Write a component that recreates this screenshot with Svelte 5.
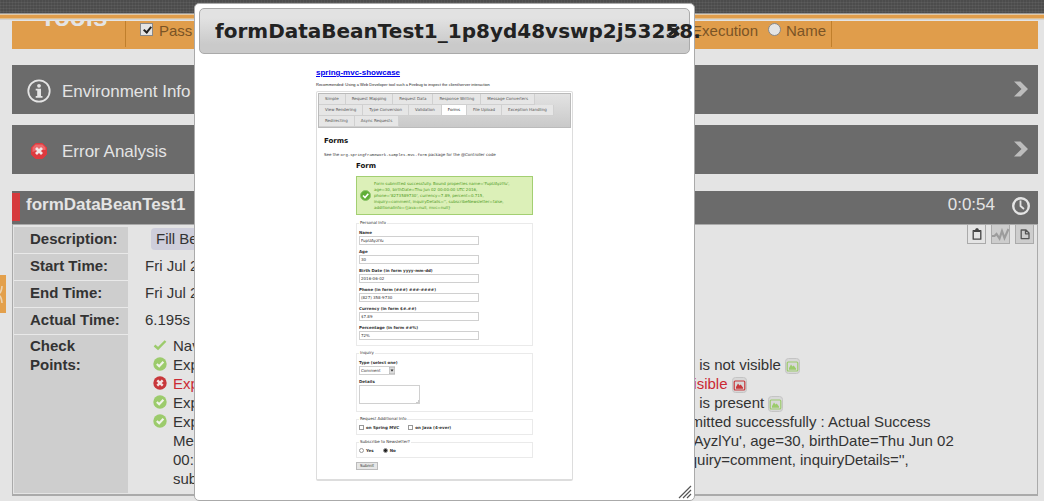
<script>
  const panels = [
    { title: 'Environment Info', kind: 'info' },
    { title: 'Error Analysis', kind: 'error' }
  ];

  const times = [
    { label: 'Start Time:', value: 'Fri Jul 29 2016 11:42:06' },
    { label: 'End Time:', value: 'Fri Jul 29 2016 11:42:12' },
    { label: 'Actual Time:', value: '6.195s' }
  ];

  const checks = [
    { state: 'done', text: 'Navigated to Forms page' },
    { state: 'pass', text: 'Expected Form Submit Success Message (css=div.success.message.box.text) is not visible', shot: true },
    { state: 'fail', text: 'Expected Form Submit Success Message (css=div.success.message.box) is visible', shot: true },
    { state: 'pass', text: 'Expected Form Submit Success Message (css=div.success.message.box.text) is present', shot: true },
    {
      state: 'pass',
      text: "Expected Success Message Text should be displayed on page like : Form submitted successfully : Actual Success Message Text is : Form submitted successfully. Bound properties name='FupUAyzlYu', age=30, birthDate=Thu Jun 02 00:00:00 UTC 2016, phone='8273589730', currency=$7.89, percent=0.715, inquiry=comment, inquiryDetails='', subscribeNewsletter=false, additionalInfo={java=null, mvc=null}"
    }
  ];

  const tabRows = [
    ['Simple', 'Request Mapping', 'Request Data', 'Response Writing', 'Message Converters'],
    ['View Rendering', 'Type Conversion', 'Validation', 'Forms', 'File Upload', 'Exception Handling'],
    ['Redirecting', 'Async Requests']
  ];

  const successLines = [
    "Form submitted successfully. Bound properties name='FupUAyzlYu',",
    'age=30, birthDate=Thu Jun 02 00:00:00 UTC 2016,',
    "phone='8273589730', currency=7.89, percent=0.715,",
    "inquiry=comment, inquiryDetails='', subscribeNewsletter=false,",
    'additionalInfo={java=null, mvc=null}'
  ];

  const fields = [
    { id: 'name', label: 'Name', value: 'FupUAyzlYu' },
    { id: 'age', label: 'Age', value: '30' },
    { id: 'birth', label: 'Birth Date (in form yyyy-mm-dd)', value: '2016-06-02' },
    { id: 'phone', label: 'Phone (in form (###) ###-####)', value: '(827) 358-9730' },
    { id: 'currency', label: 'Currency (in form $#.##)', value: '$7.89' },
    { id: 'percent', label: 'Percentage (in form ##%)', value: '72%' }
  ];
</script>

<div class="page">
  <header class="topbar"></header>
  <button class="drawer" aria-label="Open menu">
    <svg width="6" height="38" viewBox="0 0 6 38"><path d="M2 11Q1.5 19 -3 19.5Q1.5 20 2 28" fill="none" stroke="#ecd2ae" stroke-width="1.6" /></svg>
  </button>

  <main>
    <div class="toolbar">
      <h1>Tools</h1>
      <div class="filters">
        <label><input type="checkbox" checked />Pass</label>
        <div class="order">
          <label><input type="radio" name="order" checked />Execution</label>
          <label><input type="radio" name="order" />Name</label>
        </div>
      </div>
    </div>

    {#each panels as p}
      <button class="panel">
        {#if p.kind === 'info'}
          <svg width="24" height="24" viewBox="0 0 24 24">
            <circle cx="12" cy="12" r="10.7" fill="none" stroke="#e4e4e4" stroke-width="1.8" />
            <circle cx="12" cy="6.8" r="1.9" fill="#e4e4e4" />
            <path d="M8.7 9.7H14V17H15.5V18.8H8.7V17H10.2V11.4H8.7Z" fill="#e4e4e4" />
          </svg>
        {:else}
          <svg width="24" height="24" viewBox="0 0 24 24">
            <path d="M8.5 4.5H15.5L19.5 8.5V15.5L15.5 19.5H8.5L4.5 15.5V8.5Z" fill="#dd3a3f" stroke="#dd3a3f" stroke-linejoin="round" />
            <path d="M8.5 5.5H15.5L18.5 8.5V11Q12 10 5.5 13V8.5Z" fill="#ea6a6d" />
            <path d="M9 9L15 15M15 9L9 15" stroke="#f3e6e6" stroke-width="2.8" />
          </svg>
        {/if}
        <span>{p.title}</span>
        <svg class="chev" width="14" height="16" viewBox="0 0 14 16"><path d="M0 0.5H6.5L14 8L6.5 15.5H0L7.5 8Z" fill="#bcbcbc" /></svg>
      </button>
    {/each}

    <section class="result">
      <div class="result-head">
        <h2>formDataBeanTest1</h2>
        <span class="time">0:0:54</span>
        <svg width="20" height="20" viewBox="0 0 20 20">
          <circle cx="10" cy="10" r="7.8" fill="none" stroke="#e4e4e4" stroke-width="2.4" />
          <path d="M9.5 4.5V10L13 13" fill="none" stroke="#e4e4e4" stroke-width="1.8" />
        </svg>
      </div>
      <div class="result-body">
        <div class="tools">
          <button aria-label="Details">
            <svg width="14" height="16" viewBox="0 0 14 16"><path d="M3.2 4.6H10.8V13.2H3.2Z" fill="none" stroke="#444" stroke-width="1.3" stroke-linejoin="round" /><path d="M4 4H5L6 2.3H8L9 4H10V6H4Z" fill="#444" /></svg>
          </button>
          <button class="off" aria-label="Chart">
            <svg width="17" height="16" viewBox="0 0 17 16"><path d="M0 10H2.5L4.5 8L7.5 12.5L10 5L12.5 12L16.5 3" fill="none" stroke="#9c9c9c" stroke-width="2.2" /></svg>
          </button>
          <button class="off" aria-label="File">
            <svg width="14" height="16" viewBox="0 0 14 16"><path d="M3.2 4H8L11 7V12.6H3.2ZM7.5 4V7.8H11" fill="none" stroke="#555" stroke-width="1.3" stroke-linejoin="round" /></svg>
          </button>
        </div>
        <table>
          <tbody>
            <tr><th scope="row">Description:</th><td><span class="pill">Fill Bean Data</span></td></tr>
            {#each times as t}
              <tr><th scope="row">{t.label}</th><td>{t.value}</td></tr>
            {/each}
            <tr class="points">
              <th scope="row">Check Points:</th>
              <td>
                <ul>
                  {#each checks as c}
                    <li class={c.state}>
                      <svg class="mark" width="14" height="14" viewBox="0 0 14 14">
                        {#if c.state === 'done'}
                          <path d="M1.5 7.5L5 10.5L12.5 3" fill="none" stroke="#9ccb6c" stroke-width="2.4" />
                        {:else if c.state === 'pass'}
                          <circle cx="7" cy="7" r="6.7" fill="#9ccb6c" />
                          <path d="M3.8 7L6.2 9.3L10.4 4.8" fill="none" stroke="#f0f4ea" stroke-width="2.1" />
                        {:else}
                          <circle cx="7" cy="7" r="6.7" fill="#c8373b" />
                          <path d="M4.3 4.3L9.7 9.7M9.7 4.3L4.3 9.7" stroke="#f3e3e3" stroke-width="2.4" />
                        {/if}
                      </svg>
                      <p>
                        {c.text}
                        {#if c.shot}
                          <button class="shot" aria-label="Screenshot">
                            <svg width="15" height="16" viewBox="0 0 15 16">
                              <rect x="0.5" y="0.5" width="14" height="15" rx="3" fill="#d8d8d8" stroke="#c4c4c4" />
                              <rect x="2.2" y="4" width="10.6" height="9" rx="1" fill="none" stroke="currentColor" stroke-width="1.2" />
                              <path d="M4 11.7V10L6 6.5L7.5 8.5L8.7 7.5L11 10.5V11.7Z" fill="currentColor" />
                            </svg>
                          </button>
                        {/if}
                      </p>
                    </li>
                  {/each}
                </ul>
              </td>
            </tr>
          </tbody>
        </table>
      </div>
    </section>
  </main>

  <div class="dialog" role="dialog" aria-labelledby="dialog-title">
    <div class="titlebar">
      <h2 id="dialog-title">formDataBeanTest1_1p8yd48vswp2j53258.</h2>
      <button class="close" aria-label="Close">
        <svg width="12" height="10" viewBox="0 0 12 10"><path d="M1 1L11 9M11 1L1 9" stroke="#222" stroke-width="3" /></svg>
      </button>
    </div>

    <div class="preview">
      <a href="#showcase">spring-mvc-showcase</a>
      <p class="note">Recommended: Using a Web Developer tool such a Firebug to inspect the client/server interaction</p>
      <div class="sheet">
        <nav>
          {#each tabRows as row}
            <div class="tabs">
              {#each row as tab}
                <button class:active={tab === 'Forms'}>{tab}</button>
              {/each}
            </div>
          {/each}
        </nav>
        <div class="doc">
          <h3>Forms</h3>
          <p>See the <code>org.springframework.samples.mvc.form</code> package for the @Controller code</p>
          <form>
            <h3>Form</h3>
            <div class="success">
              <svg width="11" height="11" viewBox="0 0 11 11">
                <circle cx="5.5" cy="5.5" r="5" fill="#5fae35" stroke="#8cc56a" />
                <path d="M3 5.5L5 7.5L8.3 3.7" fill="none" stroke="#fff" stroke-width="1.6" />
              </svg>
              <p>{successLines.join('\n')}</p>
            </div>
            <fieldset class="personal">
              <legend>Personal Info</legend>
              {#each fields as f}
                <div class="field">
                  <label for={f.id}>{f.label}</label>
                  <input id={f.id} type="text" value={f.value} />
                </div>
              {/each}
            </fieldset>
            <fieldset class="inquiry">
              <legend>Inquiry</legend>
              <div class="field">
                <label for="type">Type (select one)</label>
                <span class="select">
                  <select id="type"><option>Comment</option></select>
                  <svg width="6" height="7" viewBox="0 0 6 7"><path d="M0 0H6V7H0Z" fill="#ddd" stroke="#aaa" stroke-width="0.8" /><path d="M1.5 2.6H4.5L3 4.8Z" fill="#333" /></svg>
                </span>
              </div>
              <div class="field">
                <label for="details">Details</label>
                <textarea id="details"></textarea>
              </div>
            </fieldset>
            <fieldset>
              <legend>Request Additional Info</legend>
              <div class="options">
                <label><input type="checkbox" />on Spring MVC</label>
                <label><input type="checkbox" />on Java (4-ever)</label>
              </div>
            </fieldset>
            <fieldset>
              <legend>Subscribe to Newsletter?</legend>
              <div class="options radios">
                <label><input type="radio" name="news" />Yes</label>
                <label><input type="radio" name="news" checked />No</label>
              </div>
            </fieldset>
            <button class="submit" type="button">Submit</button>
          </form>
        </div>
      </div>
    </div>
    <svg class="grip" width="14" height="14" viewBox="0 0 14 14"><path d="M1 13L13 1M5 13L13 5M9 13L13 9" stroke="#555" stroke-width="1.2" /></svg>
  </div>
</div>

<style>
  :global(body) { margin: 0; background: #e4e4e4; }
  .page {
    position: relative;
    overflow: hidden;
    font: 15px/19px "Liberation Sans", Arial, sans-serif;
    color: #333;
  }
  .page * { box-sizing: border-box; }
  button { font: inherit; color: inherit; margin: 0; padding: 0; border: 0; background: none; }
  h1, h2, h3, p, ul { margin: 0; padding: 0; }
  svg { display: block; flex: none; }

  .topbar {
    height: 21px;
    border-bottom: 1px solid #e4e4e4;
    background:
      linear-gradient(#999 0 1px, #e3c9a4 1px 2px, #e09d4b 2px 5px, #e3c08e 5px 6px, #d2d2d2 6px) bottom / 100% 7px no-repeat,
      repeating-linear-gradient(90deg, rgba(255, 255, 255, 0.04) 0 1px, transparent 1px 3px),
      repeating-linear-gradient(#4c4c4c 0 2px, #565656 2px 3px);
  }
  .drawer { position: absolute; left: 0; top: 275px; width: 6px; height: 38px; background: #e3a04c; }

  main { padding: 0 6px 7px 12px; }
  .toolbar {
    display: flex;
    height: 28px;
    margin-bottom: 16px;
    padding-left: 28px;
    overflow: hidden;
    background: #e09d4b;
  }
  .toolbar h1 { width: 85px; margin-top: -18px; font-size: 26px; line-height: 28px; color: #e4e4e4; }
  .filters {
    display: flex;
    justify-content: space-between;
    width: 707px;
    height: 26px;
    padding: 2px 5px 0 14px;
    border: solid #c07f2c;
    border-width: 0 1px;
    color: #7a5426;
    line-height: 16px;
  }
  .filters label { display: flex; height: 18px; }
  .filters input { appearance: none; position: relative; width: 13px; height: 13px; margin: 0 6px 0 0; border: 1px solid #888; background: #e4e4e4; }
  .filters [type='checkbox']:checked::after {
    content: '';
    position: absolute;
    left: 4px;
    top: 1px;
    width: 3px;
    height: 6px;
    border: solid #222;
    border-width: 0 2px 2px 0;
    rotate: 40deg;
  }
  .filters [type='radio'] { border-radius: 50%; margin-right: 5px; }
  .order { display: flex; gap: 10px; }

  .panel {
    display: flex;
    align-items: center;
    gap: 11px;
    width: 100%;
    height: 49px;
    margin-bottom: 11px;
    padding: 3px 10px 0 15px;
    background: #6b6b6b;
    color: #e4e4e4;
    font-size: 17px;
  }
  .chev { margin: -4px 0 0 auto; }

  .result { margin-top: 17px; }
  .result-head {
    display: flex;
    align-items: center;
    height: 33px;
    padding: 0 7px 6px 0;
    background: #6b6b6b;
    color: #e4e4e4;
    font-size: 17px;
  }
  .result-head h2 { flex: 1; height: 28px; margin-top: 5px; padding-left: 6px; border-left: 8px solid #d63a3d; font-size: 17px; line-height: 24px; }
  .result-head svg { margin: 3px 0 0 16px; }
  .result-body { position: relative; border: 1px solid #aaa; border-bottom-width: 2px; padding: 2px 1px 1px; }
  .tools { position: absolute; right: 3px; top: 0; display: flex; gap: 5px; }
  .tools button { display: grid; place-items: center; width: 19px; height: 19px; border: 1px solid #aaa; border-top: 0; overflow: hidden; }
  .tools .off { background: #cdcdcd; }

  table { width: 100%; border-spacing: 0; border-collapse: collapse; }
  th, td { height: 26px; padding: 2px 0 5px; text-align: left; vertical-align: top; }
  th { width: 114px; padding-left: 16px; padding-right: 4px; background: #cecece; border-bottom: 1px solid #e9e9e9; white-space: nowrap; }
  .points th { padding-right: 20px; border-bottom: 0; white-space: normal; }
  .points th, .points td { padding-top: 1px; }
  td { padding-left: 17px; }
  .pill { display: inline-block; height: 22px; margin: -1px 0 -4px 6px; padding: 1px 5px; border-radius: 4px; background: #cecedb; }
  ul { list-style: none; padding: 0 60px 0 8px; }
  li { display: flex; gap: 6px; }
  .mark { margin-top: 2px; }
  .fail { color: #cb2a35; }
  .shot { height: 16px; vertical-align: -4px; margin: -2px 0; color: #9ccb6c; }
  .fail .shot { color: #c8373b; }

  .dialog {
    position: absolute;
    left: 194px;
    top: 3px;
    width: 501px;
    padding: 4px;
    border: 1px solid #aaa;
    border-radius: 5px;
    background: #fff;
    font-family: "DejaVu Sans", Verdana, sans-serif;
    color: #222;
  }
  .titlebar {
    position: relative;
    height: 46px;
    padding: 8px 15px;
    border: 1px solid #aaa;
    border-radius: 5px;
    background: linear-gradient(#e2e2e2 20%, #cacaca 80%);
  }
  .titlebar h2 { font-size: 20px; line-height: 28px; white-space: nowrap; }
  .close { position: absolute; right: 9px; top: 17px; }
  .grip { position: absolute; right: 2px; bottom: 1px; }

  .preview { padding: 14px 117px 15px; font-size: 4px; line-height: 6px; }
  .preview a { display: block; font: bold 8px/9px "Liberation Sans", Arial, sans-serif; color: #00e; }
  .note { margin: 5px 0 3px; font-family: "Liberation Sans", Arial, sans-serif; white-space: nowrap; }
  .sheet { border: 1px solid #ddd; border-bottom-width: 2px; border-radius: 2px; padding: 1px; color: #333; }
  nav { border: 1px solid #bbb; background: linear-gradient(#e3e3e3, #c9c9c9); }
  .tabs { display: flex; }
  .tabs button { height: 11px; padding: 0 6px; border: solid #d0d0d0; border-width: 0 1px 1px 0; background: #e6e6e6; color: #555; }
  .tabs .active { background: #fff; color: #222; }
  .doc { padding: 9px 6px 8px; }
  .doc h3 { font-size: 7px; line-height: 9px; color: #111; }
  .doc > p { margin: 6px 0 4px; }
  code { font-family: "Liberation Mono", monospace; }
  form { display: flex; flex-direction: column; align-items: stretch; gap: 4px; padding: 0 32px; }
  .success {
    display: flex;
    align-items: center;
    gap: 3px;
    height: 39px;
    margin: 1px 0;
    padding: 0 3px;
    border: 1px solid #a3cf72;
    background: #dcf0b8;
    color: #4e9a1e;
    white-space: pre;
  }
  fieldset { margin: 0; padding: 3px 2px; border: 1px solid #eaeaea; min-width: 0; }
  legend { height: 6px; padding: 0 1px; }
  .personal { padding: 4px 2px 5px; }
  .inquiry { padding: 4px 2px 7px; }
  .field { display: flex; flex-direction: column; align-items: flex-start; }
  .field + .field { margin-top: 4px; }
  .field label, .options label { height: 6px; font-weight: bold; }
  .field input, select, textarea { appearance: none; margin: 0; padding: 0 1px; border: 1px solid #d0d0d0; border-radius: 0; background: #fff; font: inherit; color: #333; }
  .field input { width: 120px; height: 9px; }
  .select { display: flex; position: relative; }
  select { width: 36px; height: 9px; }
  .select svg { position: absolute; right: 0; top: 1px; }
  textarea { width: 61px; height: 19px; resize: none; background: linear-gradient(135deg, transparent 50%, #ccc 50%) right bottom / 3px 3px no-repeat; }
  .options { display: flex; gap: 9px; }
  .options label { display: flex; gap: 2px; }
  .options input { appearance: none; width: 5px; height: 5px; margin: 0; border: 1px solid #999; background: #fff; }
  .radios input { border-radius: 50%; }
  .radios input:checked { background: #222; }
  .submit { align-self: flex-start; height: 8px; padding: 0 3px; border: 1px solid #bbb; background: #e6e6e6; line-height: 6px; }
</style>
